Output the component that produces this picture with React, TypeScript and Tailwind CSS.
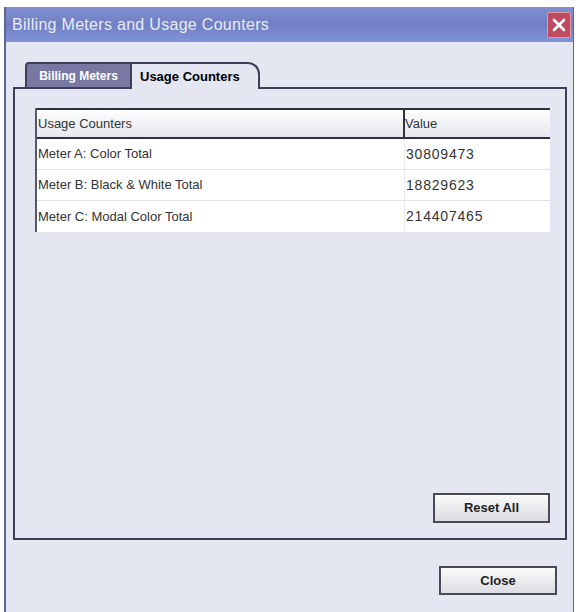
import { X } from 'lucide-react';

const rows = [
  { name: 'Meter A: Color Total', value: '30809473' },
  { name: 'Meter B: Black & White Total', value: '18829623' },
  { name: 'Meter C: Modal Color Total', value: '214407465' },
];

export default function App() {
  return (
    <div className="w-[576px] h-[612px] bg-white pt-[7px] pl-[4px] pr-[2px] font-['Liberation_Sans',Arial,sans-serif] overflow-hidden">
      <div className="h-full flex flex-col border-l-2 border-r border-[#5c6594] bg-[#e4e6f1]">
        {/* Title bar */}
        <div className="h-[35px] shrink-0 flex items-center justify-between pl-[6px] pr-[2px] bg-gradient-to-b from-[#8290d2] via-[#707fc4] to-[#8293d8]">
          <span className="text-[16px] text-[#e9ecf9] tracking-[0.3px]">Billing Meters and Usage Counters</span>
          <button className="w-[24px] h-[26px] flex items-center justify-center bg-[#c04a60] border border-[#e29aa6] rounded-[2px]">
            <X className="w-5 h-5 text-white" strokeWidth={3.2} />
          </button>
        </div>

        {/* Tabs + panel */}
        <div className="flex flex-col pl-[7px] pr-[6px] pt-[20px]">
          <div className="flex items-end pl-[12px] relative z-10">
            <div className="h-[25px] w-[107px] flex items-center justify-center bg-[#7878a2] border-2 border-b-0 border-[#3e3e58] rounded-tl-[4px] text-[12px] font-bold text-white">
              Billing Meters
            </div>
            <div className="h-[27px] w-[128px] -mb-[2px] flex items-center pl-[8px] bg-[#e4e6f1] border-2 border-b-0 border-l-0 border-[#3e3e58] rounded-tr-[12px] text-[13px] font-bold text-black">
              Usage Counters
            </div>
          </div>
          <div className="h-[453px] flex flex-col justify-between border-2 border-[#3e3e58] pt-[19px] pl-[20px] pr-[15px] pb-[15px]">
            <div className="bg-white border-l-2 border-[#55586a] text-[13px] text-[#333]">
              <div className="flex h-[31px] items-center bg-gradient-to-b from-white to-[#e6e7ee] border-t-2 border-b-2 border-[#2f3140]">
                <div className="w-[366px] pl-[1px]">Usage Counters</div>
                <div className="flex-1 h-full flex items-center border-l-2 border-[#2f3140]">Value</div>
              </div>
              {rows.map((r, i) => (
                <div
                  key={r.name}
                  className={`flex h-[31px] items-center ${i < rows.length - 1 ? 'border-b border-[#e2e2e6]' : ''}`}
                >
                  <div className="w-[367px] pl-[1px]">{r.name}</div>
                  <div className="flex-1 h-full flex items-center pl-[1px] border-l border-[#ececf0] text-[14px] tracking-[0.8px]">
                    {r.value}
                  </div>
                </div>
              ))}
            </div>
            <div className="flex justify-end">
              <button className="w-[117px] h-[30px] border-2 border-[#4a4a55] bg-gradient-to-b from-[#fafafa] to-[#dcdde3] text-[13px] font-bold text-[#222]">
                Reset All
              </button>
            </div>
          </div>
        </div>

        {/* Footer */}
        <div className="flex justify-end pt-[26px] pr-[16px]">
          <button className="w-[118px] h-[29px] border-2 border-[#4a4a55] bg-gradient-to-b from-[#fafafa] to-[#dcdde3] text-[13px] font-bold text-[#222]">
            Close
          </button>
        </div>
      </div>
    </div>
  );
}
